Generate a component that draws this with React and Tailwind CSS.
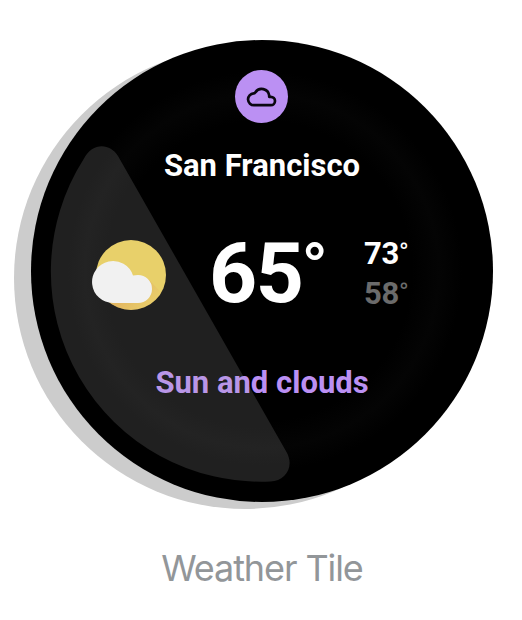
import React from 'react';

const CloudIcon = () => (
  <svg viewBox="0 0 53 53" className="w-full h-full" fill="none">
    <path
      d="M19.200 35.200a5.900 5.900 0 0 1-.5-11.800c.8 0 1.200-.3 1.600-1a7.600 7.600 0 0 1 13.900 3.100v1.300h1.600a4.200 4.200 0 0 1 0 8.400z"
      stroke="#0a0710"
      strokeWidth="2.700"
      strokeLinejoin="round"
    />
  </svg>
);

const SunCloudIcon = () => (
  <svg viewBox="0 0 74 70" className="w-[74px] h-[70px]">
    <defs>
      <linearGradient id="sunShade" gradientUnits="userSpaceOnUse" x1="44" y1="42" x2="66" y2="60">
        <stop offset="0" stopColor="#e59a45" stopOpacity="0.5" />
        <stop offset="1" stopColor="#f0b050" stopOpacity="0.1" />
      </linearGradient>
      <clipPath id="sunClip">
        <circle cx="39" cy="35" r="35" />
      </clipPath>
    </defs>
    <circle cx="39" cy="35" r="35" fill="#f5d75b" />
    <path d="M56 39L74 57V70H25L12 58z" fill="url(#sunShade)" clipPath="url(#sunClip)" />
    <path d="M21 63a21 21 0 1 1 20-27.600q2.200-.4 5-.4a14 14 0 0 1 0 28z" fill="#fff" />
  </svg>
);

// Light reflection on the glass, drawn above the content
const Glare = () => (
  <svg viewBox="0 0 462 462" className="absolute inset-0 w-full h-full pointer-events-none">
    <path
      d="M87 116L255.500 412C264 427 254 441.500 239.500 441.500A210 210 0 0 1 53 118.500C61 102.500 79 102.500 87 116z"
      fill="#b2b2b2"
      fillOpacity="0.18"
    />
  </svg>
);

const Temp = ({ value, className }) => (
  <div className={`flex h-10 items-start text-[31px] leading-[40px] ${className}`}>
    <span className="tracking-[-0.25px]">{value}</span>
    <span className="text-[26px] leading-[37px] font-normal">°</span>
  </div>
);

export default function App() {
  return (
    <div className="h-[620px] w-[522px] bg-white pt-10 pl-[31px] overflow-hidden font-['Roboto',sans-serif]">
      <div className="relative h-[462px] w-[462px]">
        <div className="absolute top-[7px] -left-[17px] h-[462px] w-[462px] rounded-full bg-[#cccccc]" />

        <div className="relative h-full w-full rounded-full bg-black bg-[radial-gradient(circle_at_center,#000_150px,#040404_177px,#000_200px)] pt-[29.5px] font-bold text-white">
          <div className="ml-[204px] h-[53px] w-[53px] rounded-full bg-[#bb90f3]">
            <CloudIcon />
          </div>

          <h1 className="mt-[25.500px] text-center text-[31px] leading-[36px]">San Francisco</h1>

          <div className="mt-[49.500px] flex h-[80px] items-start pl-[61px]">
            <div className="pt-[6.500px]">
              <SunCloudIcon />
            </div>
            <div className="ml-[43px] flex w-[124px] items-start">
              <span className="text-[84px] leading-[80px] tracking-[-1.500px]">65</span>
              <span className="-ml-px text-[69px] leading-[70px] font-medium">°</span>
            </div>
            <div className="ml-[31px]">
              <Temp value="73" className="text-white" />
              <Temp value="58" className="text-[#6b6b6b]" />
            </div>
          </div>

          <p className="mt-[51.500px] text-center text-[31px] leading-[36px] text-[#bb90f3]">Sun and clouds</p>
          <Glare />
        </div>
      </div>

      <p className="mt-[44px] w-[462px] text-center font-['Inter',sans-serif] text-[36px] leading-[44px] tracking-[-1.100px] text-[#929699]">
        Weather Tile
      </p>
    </div>
  );
}
